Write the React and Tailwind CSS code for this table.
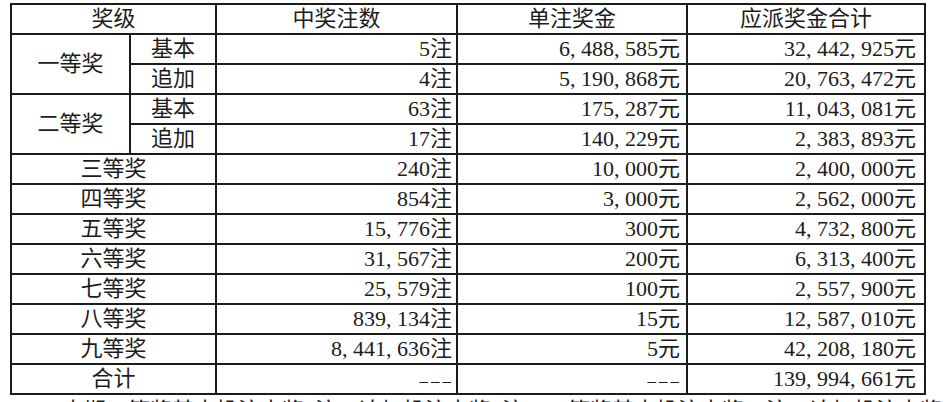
import React from 'react';

const rows = [
  { name: '三等奖', count: '240注', per: '10, 000元', total: '2, 400, 000元' },
  { name: '四等奖', count: '854注', per: '3, 000元', total: '2, 562, 000元' },
  { name: '五等奖', count: '15, 776注', per: '300元', total: '4, 732, 800元' },
  { name: '六等奖', count: '31, 567注', per: '200元', total: '6, 313, 400元' },
  { name: '七等奖', count: '25, 579注', per: '100元', total: '2, 557, 900元' },
  { name: '八等奖', count: '839, 134注', per: '15元', total: '12, 587, 010元' },
  { name: '九等奖', count: '8, 441, 636注', per: '5元', total: '42, 208, 180元' },
];

const cell = 'border-2 border-[#1c1c1c] p-0 leading-none';

const Dashes = () => <span className="text-[17px] tracking-[3px]">–––</span>;

const App = () => {
  return (
    <div
      className="w-[944px] h-[402px] overflow-hidden bg-white text-[#1c1c1c] text-[22px]"
      style={{ fontFamily: '"Liberation Serif", "Noto Sans CJK SC", serif' }}
    >
      <table className="table-fixed border-collapse w-[916px] ml-[10px] mt-[3px]">
        <colgroup>
          <col className="w-[119px]" />
          <col className="w-[86px]" />
          <col className="w-[241px]" />
          <col className="w-[230px]" />
          <col className="w-[238px]" />
        </colgroup>
        <tbody>
          {/* 表头 */}
          <tr className="h-[30px]">
            <td colSpan={2} className={`${cell} text-center`}>奖级</td>
            <td className={`${cell} text-center`}>中奖注数</td>
            <td className={`${cell} text-center`}>单注奖金</td>
            <td className={`${cell} text-center`}>应派奖金合计</td>
          </tr>

          {/* 一等奖 */}
          <tr className="h-[30px]">
            <td rowSpan={2} className={`${cell} text-center`}>一等奖</td>
            <td className={`${cell} text-center`}>基本</td>
            <td className={`${cell} text-right pr-[4px]`}>5注</td>
            <td className={`${cell} text-right pr-[6px]`}>6, 488, 585元</td>
            <td className={`${cell} text-right pr-[8px]`}>32, 442, 925元</td>
          </tr>
          <tr className="h-[30px]">
            <td className={`${cell} text-center`}>追加</td>
            <td className={`${cell} text-right pr-[4px]`}>4注</td>
            <td className={`${cell} text-right pr-[6px]`}>5, 190, 868元</td>
            <td className={`${cell} text-right pr-[8px]`}>20, 763, 472元</td>
          </tr>

          {/* 二等奖 */}
          <tr className="h-[30px]">
            <td rowSpan={2} className={`${cell} text-center`}>二等奖</td>
            <td className={`${cell} text-center`}>基本</td>
            <td className={`${cell} text-right pr-[4px]`}>63注</td>
            <td className={`${cell} text-right pr-[6px]`}>175, 287元</td>
            <td className={`${cell} text-right pr-[8px]`}>11, 043, 081元</td>
          </tr>
          <tr className="h-[30px]">
            <td className={`${cell} text-center`}>追加</td>
            <td className={`${cell} text-right pr-[4px]`}>17注</td>
            <td className={`${cell} text-right pr-[6px]`}>140, 229元</td>
            <td className={`${cell} text-right pr-[8px]`}>2, 383, 893元</td>
          </tr>

          {/* 三等奖以下 */}
          {rows.map((row, index) => (
            <tr key={index} className="h-[30px]">
              <td colSpan={2} className={`${cell} text-center`}>{row.name}</td>
              <td className={`${cell} text-right pr-[4px]`}>{row.count}</td>
              <td className={`${cell} text-right pr-[6px]`}>{row.per}</td>
              <td className={`${cell} text-right pr-[8px]`}>{row.total}</td>
            </tr>
          ))}

          {/* 合计 */}
          <tr className="h-[30px]">
            <td colSpan={2} className={`${cell} text-center`}>合计</td>
            <td className={`${cell} text-right pr-[2px]`}><Dashes /></td>
            <td className={`${cell} text-right pr-[4px]`}><Dashes /></td>
            <td className={`${cell} text-right pr-[8px]`}>139, 994, 661元</td>
          </tr>
        </tbody>
      </table>

      <p className="pl-[62px] mt-[5px] leading-none whitespace-nowrap">
        本期一等奖基本投注中奖5注，追加投注中奖4注；二等奖基本投注中奖63注，追加投注中奖17注。
      </p>
    </div>
  );
};

export default App;
